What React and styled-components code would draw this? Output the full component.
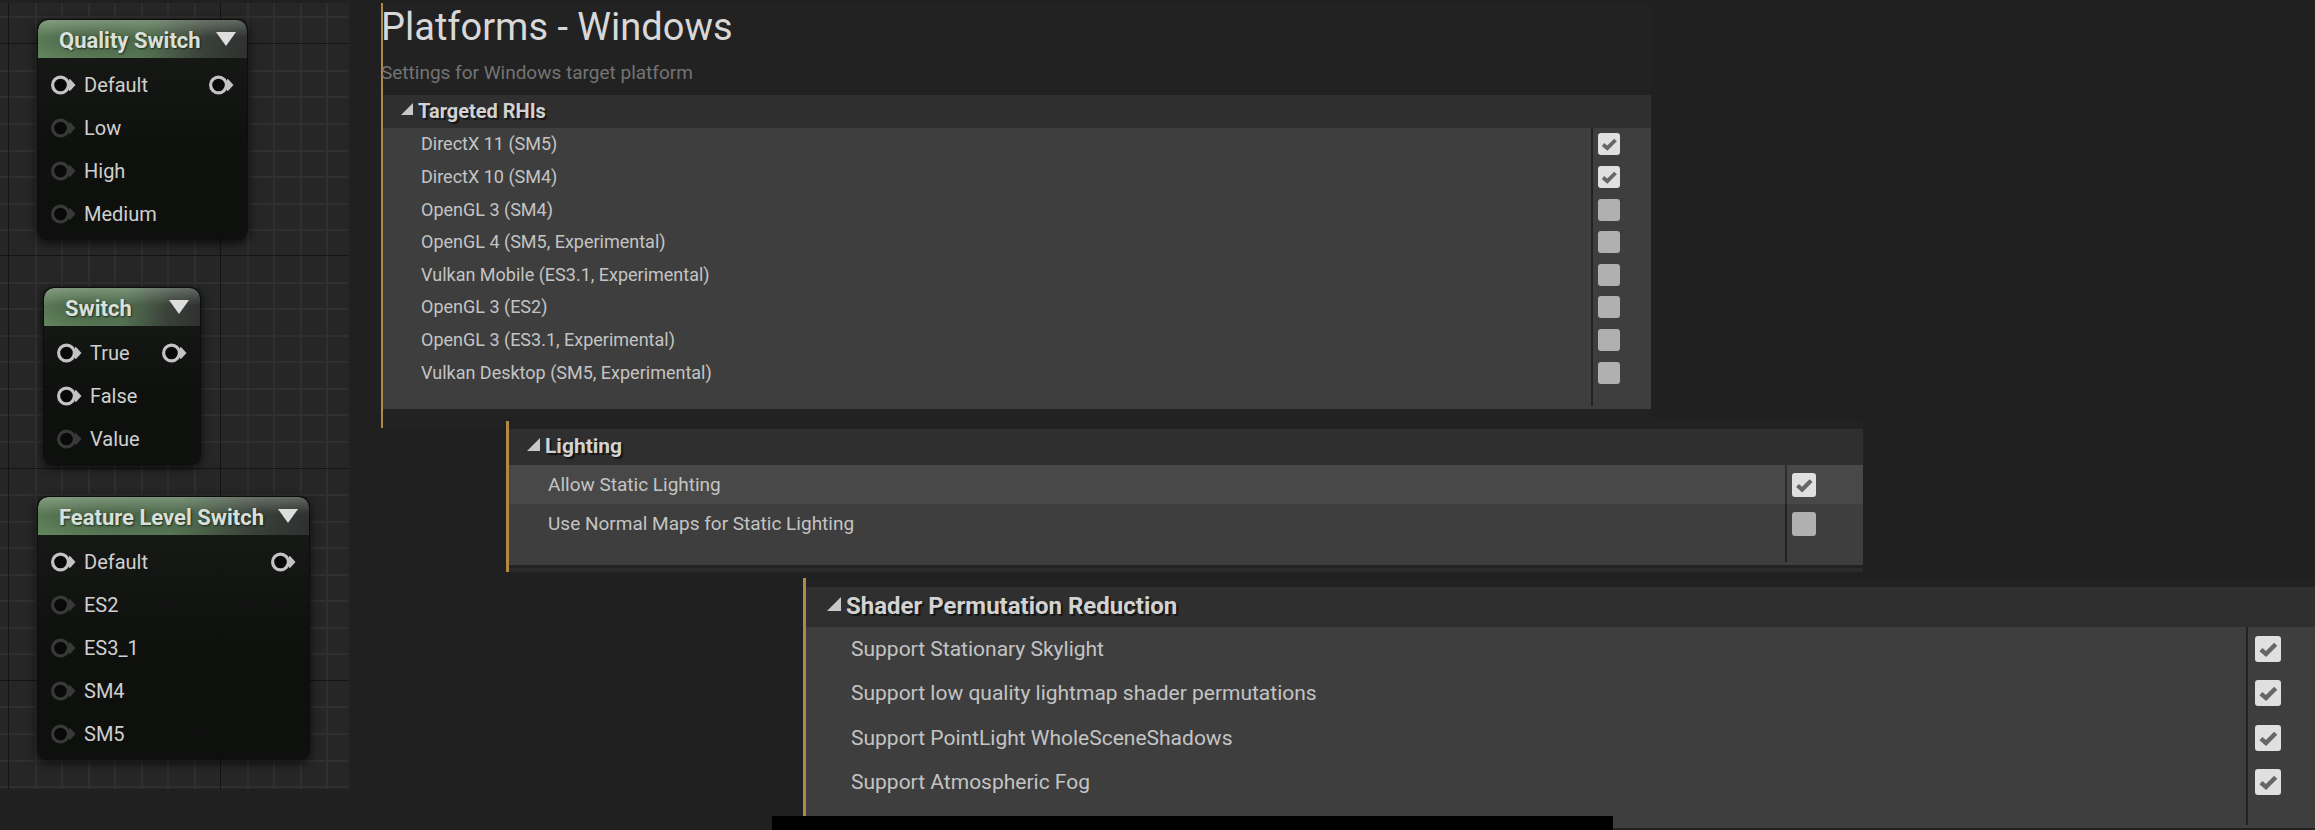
import React, { useState } from "react";
import styled, { createGlobalStyle } from "styled-components";

const GlobalStyle = createGlobalStyle`
  *, *::before, *::after { box-sizing: border-box; }
  html, body { margin: 0; background: #202020; }
  body { font-family: Roboto, "Noto Sans", sans-serif; color: #c4c4c4; }
  h1, h2, p, ul { margin: 0; padding: 0; }
`;

const Page = styled.div`
  position: relative;
  display: flex;
  align-items: flex-start;
  min-height: 100vh;
  padding-top: 3px;
  overflow: hidden;
`;

/* ---------- material graph ---------- */

const Graph = styled.aside`
  position: relative;
  flex: none;
  width: 349px;
  height: 786px;
  overflow: hidden;
  background: #262626;
`;

const GridLines = styled.svg`
  display: block;
  width: 100%;
  height: 100%;
`;

const NodeCard = styled.article`
  position: absolute;
  left: ${(p) => p.$x}px;
  top: ${(p) => p.$y}px;
  width: ${(p) => p.$width}px;
  border-radius: 10px;
  overflow: hidden;
  background: linear-gradient(rgba(24, 26, 24, 0.95), rgba(13, 15, 13, 0.96) 60%);
  box-shadow: 0 0 0 1px #0c0d0c, 0 3px 9px 2px rgba(0, 0, 0, 0.6);
`;

const NodeHeader = styled.header`
  display: flex;
  align-items: center;
  justify-content: space-between;
  height: 38px;
  padding: 3px 11px 0 21px;
  border-radius: 10px 10px 0 0;
  background:
    linear-gradient(rgba(190, 200, 190, 0.35), rgba(190, 200, 190, 0) 45%),
    radial-gradient(ellipse 40% 60% at 25% 50%, rgba(52, 70, 50, 0.5), rgba(52, 70, 50, 0)),
    linear-gradient(100deg, #64875f 0%, #557553 50%, #394039 80%, #2e302f 100%);
`;

const NodeTitle = styled.h2`
  font-size: 22px;
  line-height: 24px;
  font-weight: 700;
  white-space: nowrap;
  color: #d9e0d9;
  text-shadow: 1px 1px 2px rgba(0, 0, 0, 0.6);
`;

const NodeToggle = styled.button`
  display: flex;
  padding: 0 0 4px;
  border: 0;
  background: none;
  color: #dedede;
  cursor: pointer;
`;

const PinList = styled.ul`
  list-style: none;
  padding: 5px 13px 4px 13px;
`;

const PinRow = styled.li`
  display: flex;
  align-items: center;
  gap: 8px;
  height: 43px;
  font-size: 20px;
  line-height: 24px;
  color: #cfd0cf;
`;

const PinName = styled.span`
  flex: 1;
`;

const PinIcon = styled.svg`
  flex: none;
  width: 25px;
  height: 20px;
  color: ${(p) => (p.$active ? "#c2c3c2" : "#383a38")};
`;

/* ---------- settings panels ---------- */

const Panels = styled.main`
  flex: 1;
  min-width: 0;
  display: flex;
  flex-direction: column;
`;

const Panel = styled.section`
  margin: ${(p) => p.$margin};
  padding: ${(p) => p.$padding};
  background: linear-gradient(#b08a45, #b08a45) left / ${(p) => p.$bar}px 100% no-repeat #222222;
`;

const PageTitle = styled.h1`
  font-size: 38px;
  line-height: 48px;
  font-weight: 400;
  color: #d8d8d8;
`;

const PageNote = styled.p`
  padding: 10px 0;
  font-size: 19px;
  line-height: 24px;
  color: #747474;
`;

const Category = styled.div`
  margin-left: ${(p) => p.$bar}px;
`;

const CategoryHeader = styled.h2`
  display: flex;
  align-items: center;
  height: ${(p) => p.$height}px;
  padding: 0 0 2px ${(p) => p.$inset}px;
  background: #2f2f2f;
`;

const CategoryToggle = styled.button`
  display: flex;
  align-items: center;
  gap: 5px;
  padding: 0;
  border: 0;
  background: none;
  font: 700 ${(p) => p.$size}px/28px Roboto, "Noto Sans", sans-serif;
  color: #d2d2d2;
  text-shadow: 2px 2px 1px #151515;
  cursor: pointer;
`;

const Triangle = styled.svg`
  margin-bottom: 4px;
  color: #c8c8c8;
`;

const CategoryBody = styled.div`
  padding-bottom: ${(p) => p.$bottom}px;
  background:
    linear-gradient(#222222, #222222) right ${(p) => p.$column}px top / 2px calc(100% - 3px) no-repeat
    #3e3e3e;
`;

const RowGrid = styled.div`
  display: grid;
  grid-auto-rows: 1fr;
  min-height: ${(p) => p.$height}px;
`;

const SettingRow = styled.label`
  display: grid;
  grid-template-columns: 1fr ${(p) => p.$column}px;
  align-items: center;
  padding-left: ${(p) => p.$inset}px;
  font-size: ${(p) => p.$size}px;
  line-height: 24px;
  color: #c4c4c4;
  background: ${(p) => (p.$hovered ? "rgba(255, 255, 255, 0.055)" : "none")};
`;

const CheckFrame = styled.span`
  display: grid;
  justify-self: start;
  margin-left: ${(p) => p.$gap}px;
  width: ${(p) => p.$size}px;
  height: ${(p) => p.$size}px;

  & > * {
    grid-area: 1 / 1;
    width: 100%;
    height: 100%;
  }
`;

const CheckInput = styled.input`
  appearance: none;
  margin: 0;
  border-radius: 3px;
  background: #b0b0b0;

  &:checked {
    background: #e0e0e0;
  }
`;

const CheckMark = styled.svg`
  pointer-events: none;
`;

const NextCategoryEdge = styled.div`
  height: 4px;
  margin-top: 3px;
  background: #2b2b2b;
`;

const CaptionBar = styled.div`
  position: absolute;
  left: 772px;
  right: 702px;
  bottom: 0;
  height: 14px;
  background: #000;
`;

const nodes = [
  {
    title: "Quality Switch", x: 38, y: 17, width: 209,
    pins: [["Default", true], ["Low", false], ["High", false], ["Medium", false]],
  },
  {
    title: "Switch", x: 44, y: 285, width: 156,
    pins: [["True", true], ["False", true], ["Value", false]],
  },
  {
    title: "Feature Level Switch", x: 38, y: 494, width: 271,
    pins: [["Default", true], ["ES2", false], ["ES3_1", false], ["SM4", false], ["SM5", false]],
  },
];

const platform = {
  title: "Targeted RHIs", bar: 2, headerHeight: 33, headerInset: 18, titleSize: 20, triangle: 12,
  textSize: 18, textInset: 38, column: 58, check: 22, checkGap: 5, rowsHeight: 261, bottom: 20,
  rows: [
    ["DirectX 11 (SM5)", true],
    ["DirectX 10 (SM4)", true],
    ["OpenGL 3 (SM4)", false],
    ["OpenGL 4 (SM5, Experimental)", false],
    ["Vulkan Mobile (ES3.1, Experimental)", false],
    ["OpenGL 3 (ES2)", false],
    ["OpenGL 3 (ES3.1, Experimental)", false],
    ["Vulkan Desktop (SM5, Experimental)", false],
  ],
};

const lighting = {
  title: "Lighting", bar: 3, headerHeight: 36, headerInset: 18, titleSize: 21, triangle: 13,
  textSize: 19, textInset: 39, column: 76, check: 24, checkGap: 5, rowsHeight: 78, bottom: 22,
  rows: [
    ["Allow Static Lighting", true, true],
    ["Use Normal Maps for Static Lighting", false],
  ],
};

const shader = {
  title: "Shader Permutation Reduction", bar: 3, headerHeight: 40, headerInset: 21, titleSize: 24, triangle: 14,
  textSize: 21, textInset: 45, column: 67, check: 26, checkGap: 7, rowsHeight: 177, bottom: 24,
  rows: [
    ["Support Stationary Skylight", true],
    ["Support low quality lightmap shader permutations", true],
    ["Support PointLight WholeSceneShadows", true],
    ["Support Atmospheric Fog", true],
  ],
};

const majorX = [8, 220];
const minorX = [35, 61, 88, 114, 141, 167, 194, 247, 273, 300, 326];
const majorY = [40, 252, 465, 677];
const minorY = [13, 67, 93, 120, 147, 173, 200, 226, 279, 305, 332, 358, 385, 411, 438, 491, 518, 544, 571, 597, 624, 650, 703, 730, 757, 783];

function Grid() {
  return (
    <GridLines aria-hidden="true">
      <g fill="#2f2f2f">
        {minorX.map((x) => <rect key={x} x={x} y="0" width="2" height="100%" />)}
        {minorY.map((y) => <rect key={y} x="0" y={y} width="100%" height="2" />)}
      </g>
      <g fill="#141414">
        {majorX.map((x) => <rect key={x} x={x} y="0" width="1" height="100%" />)}
        {majorY.map((y) => <rect key={y} x="0" y={y} width="100%" height="1" />)}
      </g>
    </GridLines>
  );
}

function Pin({ active }) {
  return (
    <PinIcon viewBox="0 0 25 20" $active={active} aria-hidden="true">
      <path d="M18 4 L19.5 4.5 L24.5 10 L19.5 15.5 L18 16 Z" fill="currentColor" />
      <circle cx="9.5" cy="10" r="7.9" fill="#080908" stroke="currentColor" strokeWidth="3.2" />
    </PinIcon>
  );
}

function MaterialNode({ title, x, y, width, pins }) {
  return (
    <NodeCard $x={x} $y={y} $width={width}>
      <NodeHeader>
        <NodeTitle>{title}</NodeTitle>
        <NodeToggle type="button" aria-label={`Collapse ${title}`}>
          <svg width="20" height="14" viewBox="0 0 20 14"><path d="M0 0 H20 L10 14 Z" fill="currentColor" /></svg>
        </NodeToggle>
      </NodeHeader>
      <PinList>
        {pins.map(([name, active], i) => (
          <PinRow key={name}>
            <Pin active={active} />
            <PinName>{name}</PinName>
            {i === 0 && <Pin active />}
          </PinRow>
        ))}
      </PinList>
    </NodeCard>
  );
}

function CheckBox({ initial, size, gap }) {
  const [on, setOn] = useState(initial);
  return (
    <CheckFrame $size={size} $gap={gap}>
      <CheckInput type="checkbox" checked={on} onChange={() => setOn(!on)} />
      {on && (
        <CheckMark viewBox="0 0 22 22" aria-hidden="true">
          <path d="M5 11.5 L9.3 15.2 L17.5 7" fill="none" stroke="#666" strokeWidth="3.8" />
        </CheckMark>
      )}
    </CheckFrame>
  );
}

function SettingsCategory({ data }) {
  const t = data.triangle;
  return (
    <Category $bar={data.bar}>
      <CategoryHeader $height={data.headerHeight} $inset={data.headerInset}>
        <CategoryToggle type="button" aria-expanded="true" $size={data.titleSize}>
          <Triangle width={t} height={t} viewBox="0 0 12 12"><path d="M12 0 V12 H0 Z" fill="currentColor" /></Triangle>
          {data.title}
        </CategoryToggle>
      </CategoryHeader>
      <CategoryBody $bottom={data.bottom} $column={data.column}>
        <RowGrid $height={data.rowsHeight}>
          {data.rows.map(([name, on, hovered]) => (
            <SettingRow
              key={name}
              $size={data.textSize}
              $inset={data.textInset}
              $column={data.column}
              $hovered={hovered}
            >
              <span>{name}</span>
              <CheckBox initial={on} size={data.check} gap={data.checkGap} />
            </SettingRow>
          ))}
        </RowGrid>
      </CategoryBody>
    </Category>
  );
}

export default function App() {
  return (
    <>
      <GlobalStyle />
      <Page>
        <Graph>
          <Grid />
          {nodes.map((n) => <MaterialNode key={n.title} {...n} />)}
        </Graph>
        <Panels>
          <Panel $bar={2} $margin="0 664px 0 32px" $padding="0 0 19px">
            <PageTitle>Platforms - Windows</PageTitle>
            <PageNote>Settings for Windows target platform</PageNote>
            <SettingsCategory data={platform} />
          </Panel>
          <Panel $bar={3} $margin="-7px 452px 0 157px" $padding="8px 0 0">
            <SettingsCategory data={lighting} />
            <Category $bar={3}>
              <NextCategoryEdge />
            </Category>
          </Panel>
          <Panel $bar={3} $margin="6px 0 0 454px" $padding="9px 0 2px">
            <SettingsCategory data={shader} />
          </Panel>
        </Panels>
        <CaptionBar />
      </Page>
    </>
  );
}
